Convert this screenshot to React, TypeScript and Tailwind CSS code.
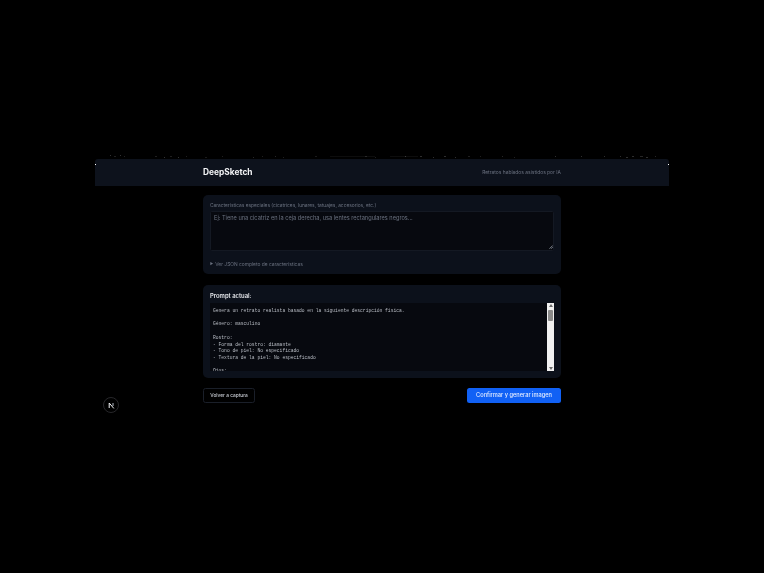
const promptText = `Genera un retrato realista basado en la siguiente descripción física.

Género: masculino

Rostro:
- Forma del rostro: diamante
- Tono de piel: No especificado
- Textura de la piel: No especificado

Ojos:
- Color: No especificado`;

// faint dotted edge above the header: x, y, width, opacity
const specks = [
  [110, 155, 1, 0.2], [114, 156, 2, 0.12], [120, 155, 1, 0.2], [124, 156, 1, 0.12], [155, 156, 2, 0.12], [164, 157, 1, 0.2],
  [170, 156, 2, 0.12], [178, 157, 1, 0.2], [186, 156, 1, 0.12], [205, 157, 2, 0.1], [222, 156, 1, 0.12], [253, 157, 1, 0.15],
  [262, 156, 1, 0.12], [275, 156, 1, 0.15], [283, 157, 1, 0.12], [315, 156, 2, 0.1], [330, 156, 45, 0.05], [365, 156, 2, 0.12],
  [375, 157, 1, 0.12], [390, 156, 28, 0.05], [405, 156, 1, 0.2], [420, 156, 2, 0.18], [433, 157, 1, 0.18], [444, 156, 2, 0.18],
  [455, 157, 1, 0.18], [468, 156, 2, 0.12], [480, 156, 1, 0.12], [502, 156, 1, 0.15], [514, 157, 1, 0.12], [555, 156, 1, 0.18],
  [581, 156, 1, 0.18], [604, 156, 1, 0.18], [620, 156, 1, 0.18], [626, 157, 2, 0.18], [632, 156, 2, 0.18], [640, 156, 3, 0.15],
  [646, 157, 2, 0.18], [655, 156, 1, 0.15],
];

function Specks() {
  return (
    <svg width="574" height="4" viewBox="95 155 574 4" className="block">
      {specks.map(([x, y, w, o]) => (
        <rect key={x} x={x} y={y} width={w} height="1" fill="#ffffff" opacity={o} />
      ))}
    </svg>
  );
}

function Scrollbar() {
  return (
    <div className="flex w-[7px] flex-col items-center bg-[#f1f1f1] py-[1px]">
      <div className="h-0 w-0 border-x-[2px] border-b-[3px] border-x-transparent border-b-[#6a6a6a]" />
      <div className="mt-[3px] h-[11px] w-[5px] rounded-[1px] bg-[#8a8a8a]" />
      <div className="flex-1" />
      <div className="h-0 w-0 border-x-[2px] border-t-[3px] border-x-transparent border-t-[#6a6a6a]" />
    </div>
  );
}

export default function App() {
  return (
    <div className="relative h-[573px] w-[764px] overflow-hidden bg-black font-['Inter',sans-serif] blur-[0.5px]">
      <div className="mx-auto flex w-[574px] flex-col pt-[155px]">
        <Specks />
        <header className="flex h-[27px] items-center justify-center rounded-t-[3px] bg-[#0d121c]">
          <div className="flex w-[358px] items-center justify-between">
            <span className="text-[8.4px] font-bold text-[#f3f4f6]">DeepSketch</span>
            <span className="text-[4.93px] text-[#6b7280]">Retratos hablados asistidos por IA</span>
          </div>
        </header>

        <main className="mx-auto flex w-[358px] flex-col pt-[9px]">
          <section className="h-[79px] rounded-[5px] bg-[#0c111b] px-[7px] pt-[7px]">
            <label className="block text-[4.83px] leading-[7px] text-[#6b7280]">
              Características especiales (cicatrices, lunares, tatuajes, accesorios, etc.)
            </label>
            <div className="relative mt-[2px] h-[40px] rounded-[1.5px] border-[0.5px] border-[#141923] bg-[#07090f] px-[3px] py-[2px] text-[5.63px] leading-[8px] text-[#6b7280]">
              Ej: Tiene una cicatriz en la ceja derecha, usa lentes rectangulares negros...
              <svg width="4" height="4" viewBox="0 0 4 4" className="absolute bottom-[1px] right-[0.5px]">
                <path d="M0.5 3.7 3.7 0.5M2.2 3.7 3.7 2.2" stroke="#9ca3af" strokeWidth="0.8" />
              </svg>
            </div>
            <div className="mt-[10px] flex items-center gap-[2px] text-[4.86px] leading-[7px] text-[#6b7280]">
              <span className="text-[3.5px]">▶</span>
              <span>Ver JSON completo de características</span>
            </div>
          </section>

          <section className="mt-[11px] h-[93px] rounded-[5px] bg-[#0c111b] px-[7px] pt-[7px]">
            <h2 className="text-[5.9px] font-semibold leading-[8px] text-[#e5e7eb]">Prompt actual:</h2>
            <div className="mt-[3px] flex h-[68px] justify-between bg-[#07090f]">
              <pre className="overflow-hidden pl-[3px] pt-[5px] font-['Liberation_Mono',monospace] text-[4.64px] leading-[6.7px] text-[#b9bdc5]">
                {promptText}
              </pre>
              <Scrollbar />
            </div>
          </section>

          <div className="mt-[10px] flex items-center justify-between">
            <button className="flex h-[15px] w-[52px] items-center justify-center rounded-[2.5px] border-[0.5px] border-[#1a1f29] bg-black text-[4.8px] font-medium text-[#c9cdd4]">
              Volver a captura
            </button>
            <button className="flex h-[15px] w-[94px] items-center justify-center rounded-[2.5px] bg-[#1161f5] text-[5.65px] font-medium text-[#e5edff]">
              Confirmar y generar imagen
            </button>
          </div>
        </main>
      </div>

      <div className="absolute left-[95px] top-[164px] h-[1px] w-[1px] bg-white" />
      <div className="absolute left-[668px] top-[164px] h-[1px] w-[1px] bg-white" />

      <div className="absolute left-[103px] top-[397px] flex h-[16px] w-[16px] items-center justify-center rounded-full border-[0.5px] border-[#27272a] bg-black">
        <svg width="7" height="7" viewBox="0 0 7 7" fill="none">
          <path d="M1.2 6V1L5.8 6.4" stroke="#f3f4f6" strokeWidth="1" />
          <path d="M5 1V4" stroke="#b6bcc6" strokeWidth="1" />
        </svg>
      </div>
    </div>
  );
}
